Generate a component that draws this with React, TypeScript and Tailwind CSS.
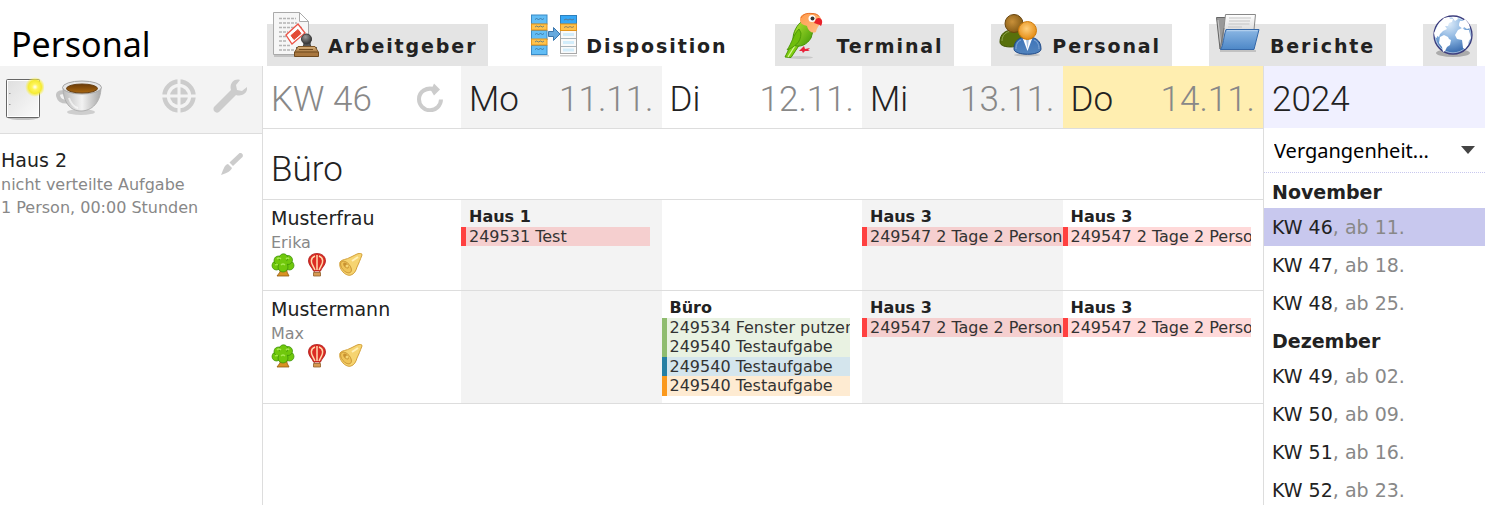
import React, { useState } from 'react';

interface IconProps {
  className?: string;
}

interface Task {
  label: string;
  tone: 'red' | 'green' | 'blue' | 'orange';
}

interface DayPlan {
  place: string;
  tasks: Task[];
  continues?: boolean;
}

interface Employee {
  lastName: string;
  firstName: string;
  days: (DayPlan | null)[];
}

const StampIcon: React.FC<IconProps> = ({ className }) => (
  <svg viewBox="0 0 48 48" className={className} aria-hidden="true">
    <defs>
      <linearGradient id="stampWood" x1="0" y1="0" x2="0" y2="1">
        <stop offset="0" stopColor="#d9b27c" />
        <stop offset="1" stopColor="#94622c" />
      </linearGradient>
      <radialGradient id="stampKnob" cx=".4" cy=".3" r=".7">
        <stop offset="0" stopColor="#999" />
        <stop offset="1" stopColor="#333" />
      </radialGradient>
    </defs>
    <path d="M2 43h34v2H2z" fill="#000" opacity=".15" />
    <path d="M1.500 .5h26l9 9v33h-35z" fill="#f6f6f6" stroke="#aaa" />
    <path d="M27.500 .5v9h9z" fill="#fff" stroke="#aaa" />
    <path d="M7 6.500h17M7 11h18M7 15.500h24M7 20h9M7 24.500h7M7 29h8M7 33.500h11M7 38h15" stroke="#b4b4b4" strokeWidth="1.300" strokeDasharray="3 1" fill="none" />
    <path d="M14 23 26 12l7 9-13 11z" fill="#fff" stroke="#ec5347" strokeWidth="1.300" />
    <path d="m19 23.500 7-6 3 4-7 6z" fill="#e34b36" stroke="#e34b36" strokeLinejoin="round" />
    <path d="M24 36c5 0 8-1 8-5l-1-3h8l-1 3c0 4 3 5 7 5z" fill="#555" stroke="#333" />
    <circle cx="34.500" cy="27" r="5" fill="url(#stampKnob)" stroke="#3b3b3b" />
    <path d="M26 34.500h17l3 5v3H23v-3z" fill="url(#stampWood)" stroke="#7d5526" />
    <path d="M22.500 40h24v4.500h-24z" fill="#a9773f" stroke="#6f4a1f" />
    <path d="M27 37.500h14" stroke="#6f4a1f" />
  </svg>
);

const PlanIcon: React.FC<IconProps> = ({ className }) => (
  <svg viewBox="0 0 48 48" className={className} aria-hidden="true">
    <path d="M1 43h18v1.500H1zM30 43h17v1.500H30z" fill="#000" opacity=".18" />
    {[3, 18.500, 33.500].map((y) => (
      <rect key={y} x="1.500" y={y} width="15.500" height="9" fill="#62bdf5" stroke="#398bc7" />
    ))}
    {[12, 27].map((y) => (
      <rect key={y} x="1.500" y={y} width="15.500" height="6" fill="#ffc24b" stroke="#e4951c" />
    ))}
    {[7.500, 15, 22.500, 30, 37.500].map((y) => (
      <path key={y} d={`M5 ${y}l1.500-1 2 1 2-1 2 1 1.500-1`} fill="none" stroke="#35668c" opacity=".7" />
    ))}
    <rect x="30.500" y="3.500" width="16" height="38" fill="#fafafa" stroke="#a9a9a9" />
    <rect x="30.500" y="3.500" width="16" height="8.500" fill="#36a8f6" stroke="#2d80bc" />
    <rect x="30.500" y="12" width="16" height="6.500" fill="#ffc24b" stroke="#e4951c" />
    <path d="M34 8l2-1 2 1 2-1 2 1 2-1M34 15.500l2-1 2 1 2-1 2 1 2-1" fill="none" stroke="#64676b" opacity=".7" />
    <path d="M31 26.500h15M31 34.500h15" stroke="#a9b4bb" />
    <path d="M33 22.500h11M33 30.500h11M33 38h11" stroke="#d3edfb" strokeWidth="3" />
    <path d="M18.500 19.500h5v-4l6.500 6.500-6.500 6.500v-4h-5z" fill="#66a9de" stroke="#3c77ad" strokeLinejoin="round" />
  </svg>
);

const ParrotIcon: React.FC<IconProps> = ({ className }) => (
  <svg viewBox="0 0 48 48" className={className} aria-hidden="true">
    <defs>
      <linearGradient id="parrotBody" x1="0" y1="0" x2="1" y2="1">
        <stop offset="0" stopColor="#b9e832" />
        <stop offset="1" stopColor="#3c9605" />
      </linearGradient>
      <linearGradient id="parrotHead" x1="0" y1="0" x2="1" y2="1">
        <stop offset="0" stopColor="#ff9a4a" />
        <stop offset="1" stopColor="#ffc188" />
      </linearGradient>
    </defs>
    <ellipse cx="20" cy="45.500" rx="13" ry="1.500" fill="#000" opacity=".12" />
    <path d="M20 38l4-4 1 3 5-1-2 2 2 1h-5l-2 2-1-2h-3z" fill="#e8233a" />
    <path d="M14 27 5 45l6 .5 8-12z" fill="#80d010" stroke="#4d9407" />
    <path d="M16 32 8 45" stroke="#d7f39a" strokeWidth="1.300" />
    <path d="M22 9C17 13 13 20 13 27l1 6c5 3 13 0 17-7l2-7c0-5-6-9-11-10z" fill="url(#parrotBody)" stroke="#489508" />
    <path d="M19 17c-6 6-7 14-12 21 7-3 14-7 14-17z" fill="#6fbe0c" stroke="#459005" strokeWidth=".8" />
    <path d="M20 8C20 3 24 1 30 1s10 2 11 6c1 5-4 7-5 13-5 2-8-2-9-6-3-1-7-2-7-6z" fill="url(#parrotHead)" />
    <path d="M21 6c2-4 6-5 11-4.500 3 0 6 1 7 3" fill="none" stroke="#e8702a" />
    <path d="M36 7c5-3 8 2 5 7-2-2-5-2-7-3z" fill="#e8232a" />
    <circle cx="32" cy="6.500" r="3.500" fill="#fff" />
    <circle cx="32.500" cy="6.500" r="2" fill="#343434" />
  </svg>
);

const PeopleIcon: React.FC<IconProps> = ({ className }) => (
  <svg viewBox="0 0 48 48" className={className} aria-hidden="true">
    <defs>
      <radialGradient id="headBack" cx=".4" cy=".4" r=".6">
        <stop offset="0" stopColor="#c89039" />
        <stop offset="1" stopColor="#865c17" />
      </radialGradient>
      <radialGradient id="headFront" cx=".45" cy=".4" r=".6">
        <stop offset="0" stopColor="#ffcf7b" />
        <stop offset="1" stopColor="#e48b13" />
      </radialGradient>
      <linearGradient id="coatFront" x1="0" y1="0" x2="0" y2="1">
        <stop offset="0" stopColor="#3d73b8" />
        <stop offset="1" stopColor="#5284be" />
      </linearGradient>
    </defs>
    <ellipse cx="31" cy="43" rx="13" ry="1.500" fill="#000" opacity=".15" />
    <path d="M4 30c0-8 5-12 13-12s12 4 12 12c0 5-25 8-25 0z" fill="#58700b" stroke="#3f5200" />
    <path d="M6 29c0-6 4-9 9-10" fill="none" stroke="#8fa44d" />
    <circle cx="18" cy="11.500" r="9" fill="url(#headBack)" stroke="#69450d" />
    <path d="M18 37c0-9 6-12 13.500-12S45 28 45 37c0 7-27 7-27 0z" fill="url(#coatFront)" stroke="#204a87" />
    <path d="M27 27h9l-4.500 12z" fill="#fff" />
    <path d="m30 27 1.500 10L33 27z" fill="#aac4e3" />
    <path d="M20 37c0-5 2-8 5-9M43 37c0-5-2-8-5-9" fill="none" stroke="#83a8d6" />
    <circle cx="31.500" cy="18.500" r="9" fill="url(#headFront)" stroke="#ce7b0b" />
  </svg>
);

const FolderIcon: React.FC<IconProps> = ({ className }) => (
  <svg viewBox="0 0 48 48" className={className} aria-hidden="true">
    <defs>
      <linearGradient id="folderFront" x1="0" y1="0" x2="0" y2="1">
        <stop offset="0" stopColor="#8bb7e4" />
        <stop offset="1" stopColor="#4d87c7" />
      </linearGradient>
      <linearGradient id="folderPaper" x1="0" y1="0" x2="0" y2="1">
        <stop offset="0" stopColor="#fff" />
        <stop offset="1" stopColor="#bbb" />
      </linearGradient>
    </defs>
    <path d="M6 38h36v2H6z" fill="#000" opacity=".15" />
    <path d="M2.500 5.500h10l6 2v29L6 37z" fill="#999" stroke="#666" />
    <path d="m4 8 3 27" stroke="#c9c9c9" />
    <path d="M11.500 2.500h30L39 28l-31 5z" fill="url(#folderPaper)" stroke="#888" />
    <path d="M15 6h22M15 9h21M14.500 12h21M14 15h14" stroke="#c5c5c5" />
    <path d="m6 37 4-21" stroke="#777" />
    <path d="M12 17.500h33l-5 20H6.500c3-4 3-13 5.500-20z" fill="url(#folderFront)" stroke="#3568a8" />
    <path d="M13 18.700h30.500" stroke="#b9d4ef" />
  </svg>
);

const GlobeIcon: React.FC<IconProps> = ({ className }) => (
  <svg viewBox="0 0 48 48" className={className} aria-hidden="true">
    <defs>
      <radialGradient id="globeSea" cx=".4" cy=".2" r=".85">
        <stop offset="0" stopColor="#dcebf9" />
        <stop offset=".5" stopColor="#85b0de" />
        <stop offset="1" stopColor="#2a5ea5" />
      </radialGradient>
    </defs>
    <ellipse cx="24" cy="41" rx="17" ry="4" fill="#000" opacity=".25" />
    <circle cx="24" cy="23" r="19" fill="url(#globeSea)" stroke="#3c3c7c" strokeWidth="1.300" />
    <path d="M7 17l3-6 5-5 5-1 1 2 3 0-1 3-3 1-1 3-3 0 2 3-4 2-3 3-1 3-2-1 0 2-2-1-1-4z" fill="#fff" />
    <path d="M11 25l4-2 4 2 1 2 2 1-1 5-3 2-2 4-2 1-1-5-3-4z" fill="#fff" />
    <path d="M23 5l5 0 1 2-3 2zM30 12l1-3 3 0 2-2 4 5 1 4-3 1-3-2-1 2-4-3z" fill="#fff" />
    <path d="M29 18l4-2 3 2 4 0 2 8-2 3-1 4-3 4-2-1-1-8-5-1-2-4z" fill="#fff" />
    <circle cx="24" cy="23" r="17.800" fill="none" stroke="#fff" strokeWidth=".8" opacity=".6" />
  </svg>
);

const NewNoteIcon: React.FC<IconProps> = ({ className }) => (
  <svg viewBox="0 0 40 44" className={className} aria-hidden="true">
    <defs>
      <linearGradient id="notePage" x1="0" y1="0" x2="1" y2="1">
        <stop offset="0" stopColor="#dedede" />
        <stop offset="1" stopColor="#fbfbfb" />
      </linearGradient>
      <radialGradient id="noteGlow">
        <stop offset="0" stopColor="#fff" />
        <stop offset=".3" stopColor="#fff55a" />
        <stop offset=".65" stopColor="#f5eb35" />
        <stop offset="1" stopColor="#f7ef4f" stopOpacity="0" />
      </radialGradient>
    </defs>
    <ellipse cx="19" cy="41" rx="15" ry="2" fill="#000" opacity=".2" />
    <rect x="2.500" y="2.500" width="33" height="38" rx="1" fill="url(#notePage)" stroke="#666" />
    <path d="M3.500 3.500h31v36h-31z" fill="none" stroke="#fff" />
    <path d="M5 16.500h1.500M5 27.500h1.500" stroke="#999" />
    <circle cx="31" cy="10" r="10" fill="url(#noteGlow)" />
  </svg>
);

const CoffeeIcon: React.FC<IconProps> = ({ className }) => (
  <svg viewBox="0 0 48 40" className={className} aria-hidden="true">
    <defs>
      <linearGradient id="cupSide" x1="0" y1="0" x2="1" y2="0">
        <stop offset="0" stopColor="#bbb" />
        <stop offset=".5" stopColor="#f2f2f2" />
        <stop offset="1" stopColor="#a8a8a8" />
      </linearGradient>
      <linearGradient id="cupCoffee" x1="0" y1="0" x2="0" y2="1">
        <stop offset="0" stopColor="#6b3b08" />
        <stop offset="1" stopColor="#a9670f" />
      </linearGradient>
    </defs>
    <ellipse cx="25" cy="33" rx="14" ry="3" fill="#000" opacity=".15" />
    <path d="M9 13.500c-6-1-8 1-6.500 4.500 1 4 5 5 10 4.500" fill="none" stroke="#c4c4c4" strokeWidth="4" />
    <path d="M7 8c0 15 7 24 18 24S45 23 45 8z" fill="url(#cupSide)" stroke="#b0b0b0" />
    <ellipse cx="26" cy="8.500" rx="19.500" ry="6.500" fill="#e6e6e6" stroke="#a6a6a6" />
    <ellipse cx="26" cy="9.500" rx="15.500" ry="4.500" fill="url(#cupCoffee)" stroke="#6a4317" />
    <path d="M13 19c2 6 5 9 9 10" fill="none" stroke="#fff" strokeWidth="2" opacity=".6" />
  </svg>
);

const TargetIcon: React.FC<IconProps> = ({ className }) => (
  <svg viewBox="0 0 34 34" className={className} aria-hidden="true">
    <circle cx="17" cy="17" r="14.500" fill="none" stroke="#ccc" strokeWidth="4.500" />
    <circle cx="17" cy="17" r="9" fill="#ccc" />
    <path d="M17 0v34M0 17h34" stroke="#f3f3f3" strokeWidth="3" />
  </svg>
);

const WrenchIcon: React.FC<IconProps> = ({ className }) => (
  <svg viewBox="0 0 34 34" className={className} aria-hidden="true">
    <path d="M27 1c-6-2-11 4-9 10L1 28c-2 4 2 7 5 5l17-17c6 2 12-2 11-8l-5 4-5-1-1-5z" fill="#ccc" />
  </svg>
);

const BrushIcon: React.FC<IconProps> = ({ className }) => (
  <svg viewBox="0 0 24 24" className={className} aria-hidden="true">
    <path d="M9.500 10.500 19 1.500c2-1.500 5 1 3.500 3.500L13 14z" fill="#ccc" />
    <path d="m8 12 4 4c-1 3-5 5-11 7 2-4 3-10 7-11z" fill="#ccc" />
  </svg>
);

const ReloadIcon: React.FC<IconProps> = ({ className }) => (
  <svg viewBox="0 0 26 29" className={className} aria-hidden="true">
    <path d="M18 6.500C9 3.500 2 9 2 16a11 11 0 0 0 22 0.500" fill="none" stroke="#ccc" strokeWidth="4" />
    <path d="m17 .5 6 6-6 6-3-5z" fill="#ccc" />
  </svg>
);

const TreeIcon: React.FC<IconProps> = ({ className }) => (
  <svg viewBox="0 0 24 24" className={className} aria-hidden="true">
    <path d="M9 15h7l0 4 2 4h-12l3-4z" fill="#d99224" stroke="#935a10" strokeWidth=".8" />
    <g fill="#70c80c" stroke="#388c08" strokeWidth=".7">
      <circle cx="5.500" cy="12.500" r="4.500" />
      <circle cx="18.500" cy="12.500" r="4.500" />
      <circle cx="7.500" cy="7.500" r="4.500" />
      <circle cx="17" cy="7" r="4.500" />
      <circle cx="12.500" cy="5" r="4.200" />
      <circle cx="12" cy="14" r="5" />
    </g>
    <circle cx="12" cy="10" r="4" fill="#70c80c" />
    <path d="M6 6q2-2 4 0M10 12q2-2 4 0M15 6q2-2 3 0M4 12q2-1 3 0" fill="none" stroke="#a7e951" strokeWidth="1.300" />
  </svg>
);

const BalloonIcon: React.FC<IconProps> = ({ className }) => (
  <svg viewBox="0 0 24 24" className={className} aria-hidden="true">
    <path d="M9 17.500l.5 2M15 17.500l-.5 2" stroke="#9b6a34" />
    <path d="M12 .5c-5 0-8.500 3-8.500 7.500 0 4 4 7 5 10h7c1-3 5-6 5-10C20.500 3.500 17 .5 12 .5z" fill="#dc2c23" stroke="#a91918" strokeWidth=".8" />
    <path d="M10 3C5 5 6 10 8 13l2 4M14 3c5 2 4 7 2 10l-2 4M12 2v15" fill="none" stroke="#ffd8ad" strokeWidth="1.500" />
    <path d="M8.500 19.500h7V23h-7z" fill="#d79a52" stroke="#90602b" strokeWidth=".8" />
  </svg>
);

const BellIcon: React.FC<IconProps> = ({ className }) => (
  <svg viewBox="0 0 24 24" className={className} aria-hidden="true">
    <path d="M1 9c2-3 6-2 11-5l6-3c3-1 5-1 5 1-2 5-3 8-5 12-1 4-3 7-6 8-5 2-13-6-11-13z" fill="#f6d470" stroke="#d3a03a" />
    <ellipse cx="7" cy="14" rx="4" ry="7" transform="rotate(-40 7 14)" fill="#efc458" stroke="#c79130" strokeWidth=".8" />
    <ellipse cx="7" cy="12.500" rx="2" ry="3.500" transform="rotate(-40 7 12.500)" fill="#c99331" />
    <path d="M13 8l6-4" stroke="#fff0b8" strokeWidth="2" />
    <circle cx="8" cy="13" r="1.500" fill="#f5d573" />
  </svg>
);

const tabs = [
  { label: 'Arbeitgeber', Icon: StampIcon },
  { label: 'Disposition', Icon: PlanIcon, active: true },
  { label: 'Terminal', Icon: ParrotIcon },
  { label: 'Personal', Icon: PeopleIcon },
  { label: 'Berichte', Icon: FolderIcon },
];

const days = [
  { name: 'Mo', date: '11.11.', bg: 'bg-[#f3f3f3]' },
  { name: 'Di', date: '12.11.', bg: 'bg-white' },
  { name: 'Mi', date: '13.11.', bg: 'bg-[#f3f3f3]' },
  { name: 'Do', date: '14.11.', bg: 'bg-[#ffeeb0]' },
];

const haus3 = (continues: boolean): DayPlan => ({
  place: 'Haus 3',
  tasks: [{ label: '249547 2 Tage 2 Personen', tone: 'red' }],
  continues,
});

const employees: Employee[] = [
  {
    lastName: 'Musterfrau',
    firstName: 'Erika',
    days: [
      { place: 'Haus 1', tasks: [{ label: '249531 Test', tone: 'red' }] },
      null,
      haus3(true),
      haus3(false),
    ],
  },
  {
    lastName: 'Mustermann',
    firstName: 'Max',
    days: [
      null,
      {
        place: 'Büro',
        tasks: [
          { label: '249534 Fenster putzen', tone: 'green' },
          { label: '249540 Testaufgabe', tone: 'green' },
          { label: '249540 Testaufgabe', tone: 'blue' },
          { label: '249540 Testaufgabe', tone: 'orange' },
        ],
      },
      haus3(true),
      haus3(false),
    ],
  },
];

const toneStyles = {
  red: 'border-[#ff4040] bg-[#ff4040]/20',
  green: 'border-[#8fbc6f] bg-[#8fbc6f]/20',
  blue: 'border-[#267fa3] bg-[#267fa3]/20',
  orange: 'border-[#fb991c] bg-[#fb991c]/20',
};

const months = [
  { name: 'November', weeks: [{ kw: 46, from: '11.' }, { kw: 47, from: '18.' }, { kw: 48, from: '25.' }] },
  { name: 'Dezember', weeks: [{ kw: 49, from: '02.' }, { kw: 50, from: '09.' }, { kw: 51, from: '16.' }, { kw: 52, from: '23.' }] },
];

const Header: React.FC = () => (
  <header className="flex h-[66px] shrink-0 items-end pr-2">
    <h1 className="w-[267px] shrink-0 pl-[11px] font-['Noto_Sans',sans-serif] text-[34px] leading-[44px] text-black">Personal</h1>
    <nav className="flex flex-1 items-end justify-between">
      {tabs.map(({ label, Icon, active }) => (
        <a
          key={label}
          href="#"
          className={`flex h-[42px] items-end gap-2 pl-[5px] pr-[11px] ${active ? 'bg-white' : 'bg-[#e4e4e4]'}`}
        >
          <Icon className="mb-[6px] size-12 shrink-0" />
          <span className="pb-2 text-[19px] leading-6 font-bold tracking-widest">{label}</span>
        </a>
      ))}
      <a href="#" aria-label="Web" className="flex h-[42px] items-end bg-[#e4e4e4] pl-[6px]">
        <GlobeIcon className="mb-[6px] size-12 shrink-0" />
      </a>
    </nav>
  </header>
);

const Sidebar: React.FC = () => (
  <aside className="w-[263px] shrink-0 border-r border-[#ddd]">
    <div className="flex h-[68px] items-start border-b border-[#ddd] bg-[#f3f3f3] pt-[11px] pr-[15px] pl-1">
      <button type="button" aria-label="Neue Aufgabe">
        <NewNoteIcon className="h-11 w-10" />
      </button>
      <button type="button" aria-label="Pause" className="ml-3">
        <CoffeeIcon className="mt-[2px] h-10 w-12" />
      </button>
      <button type="button" aria-label="Zentrieren" className="mt-[2px] ml-auto">
        <TargetIcon className="size-[34px]" />
      </button>
      <button type="button" aria-label="Einstellungen" className="mt-[2px] ml-[17px]">
        <WrenchIcon className="size-[34px]" />
      </button>
    </div>
    <div className="flex justify-between pt-[14px] pr-[18px] pl-px">
      <div>
        <h2 className="text-[19px] leading-[25px]">Haus 2</h2>
        <p className="text-base leading-[23px] text-[#888]">nicht verteilte Aufgabe</p>
        <p className="text-base leading-[23px] text-[#888]">1 Person, 00:00 Stunden</p>
      </div>
      <button type="button" aria-label="Bearbeiten" className="mt-1 self-start">
        <BrushIcon className="size-6" />
      </button>
    </div>
  </aside>
);

const DayCell: React.FC<{ plan: DayPlan | null; shaded: boolean }> = ({ plan, shaded }) => (
  <td className={`overflow-hidden py-[7px] align-top ${shaded ? 'bg-[#f3f3f3]' : 'bg-white'}`}>
    {plan && (
      <>
        <div className="pl-2 text-base leading-5 font-bold">{plan.place}</div>
        <ul className={plan.continues ? '' : 'mr-3'}>
          {plan.tasks.map((task, i) => (
            <li
              key={i}
              className={`overflow-hidden border-l-[5px] pl-[3px] text-base leading-[19px] whitespace-nowrap text-[#333] odd:h-[19px] even:h-5 ${toneStyles[task.tone]}`}
            >
              {task.label}
            </li>
          ))}
        </ul>
      </>
    )}
  </td>
);

const Schedule: React.FC = () => (
  <main className="min-w-0 flex-1">
    <table className="w-full table-fixed border-collapse text-left">
      <colgroup>
        <col className="w-[198px]" />
        <col />
        <col />
        <col />
        <col />
      </colgroup>
      <thead className="font-[Roboto,sans-serif] text-[35px] leading-[56px]">
        <tr className="border-b border-[#ddd]">
          <th className="pt-[6px] pr-[18px] pb-0 pl-2 font-light text-[#888]">
            <div className="flex items-center justify-between">
              KW 46
              <button type="button" aria-label="Neu laden" className="mb-[6px]">
                <ReloadIcon className="h-[29px] w-[26px]" />
              </button>
            </div>
          </th>
          {days.map((day) => (
            <th key={day.name} className={`px-2 pt-[6px] pb-0 font-light ${day.bg}`}>
              <div className="flex justify-between">
                {day.name}
                <span className="text-[#888]">{day.date}</span>
              </div>
            </th>
          ))}
        </tr>
      </thead>
      <tbody>
        <tr className="border-b border-[#ddd]">
          <th colSpan={5} className="pt-3 pl-2 font-[Roboto,sans-serif] text-[35px] leading-[58px] font-light">Büro</th>
        </tr>
        {employees.map((employee) => (
          <tr key={employee.lastName} className="h-[91px] border-b border-[#ddd]">
            <th className="pt-[6px] pl-2 align-top font-normal">
              <div className="text-[19px] leading-[25px]">{employee.lastName}</div>
              <div className="text-base leading-6 text-[#888]">{employee.firstName}</div>
              <div className="-mt-[2px] flex gap-[10px]">
                <TreeIcon className="size-6" />
                <BalloonIcon className="size-6" />
                <BellIcon className="size-6" />
              </div>
            </th>
            {employee.days.map((plan, i) => (
              <DayCell key={i} plan={plan} shaded={i % 2 === 0} />
            ))}
          </tr>
        ))}
      </tbody>
    </table>
  </main>
);

const WeekList: React.FC = () => {
  const [selected, setSelected] = useState(46);

  return (
    <aside className="w-[222px] shrink-0 border-l border-[#ddd]">
      <h2 className="bg-[#f0f0ff] pt-[6px] pl-2 font-[Roboto,sans-serif] text-[35px] leading-[56px] font-light">2024</h2>
      <div className="relative border-b border-dotted border-[#c8c8ee]">
        <select
          aria-label="Zeitraum"
          className="h-[44px] w-full appearance-none bg-white pt-[2px] pl-[10px] font-['Noto_Sans',sans-serif] text-[20px] text-black outline-none"
        >
          <option>Vergangenheit...</option>
        </select>
        <svg viewBox="0 0 14 8" className="pointer-events-none absolute top-[18px] right-[10px] h-2 w-[14px]" aria-hidden="true">
          <path d="M0 0h14L7 8z" fill="#444" />
        </svg>
      </div>
      {months.map((month) => (
        <section key={month.name}>
          <h3 className="pt-1 pl-2 text-[19px] leading-[31px] font-bold">{month.name}</h3>
          {month.weeks.map((week) => (
            <button
              key={week.kw}
              type="button"
              onClick={() => setSelected(week.kw)}
              className={`block w-full pl-2 text-left text-[19px] leading-[38px] ${selected === week.kw ? 'bg-[#c8c8ee]' : ''}`}
            >
              KW {week.kw}
              <span className="text-[#888]">, ab {week.from}</span>
            </button>
          ))}
        </section>
      ))}
    </aside>
  );
};

export default function App() {
  return (
    <div className="flex h-screen flex-col overflow-hidden bg-white font-['DejaVu_Sans',sans-serif] text-[#222]">
      <Header />
      <div className="flex min-h-0 flex-1">
        <Sidebar />
        <Schedule />
        <WeekList />
      </div>
    </div>
  );
}
